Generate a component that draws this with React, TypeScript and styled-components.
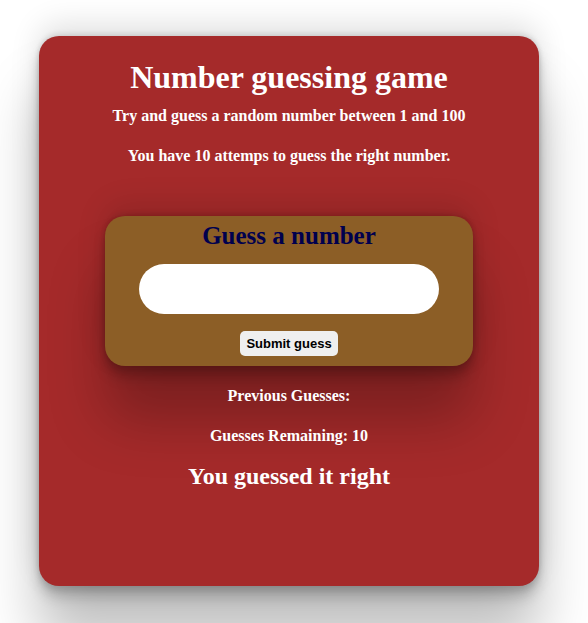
import React, { useState } from "react";
import styled, { createGlobalStyle } from "styled-components";

const GlobalStyle = createGlobalStyle`
  body {
    margin: 0;
    background: #fff;
    font-family: "Liberation Serif", "Times New Roman", serif;
  }
`;

const Page = styled.main`
  display: flex;
  justify-content: center;
  align-items: flex-start;
  min-height: 100vh;
  box-sizing: border-box;
  padding: 36px 49px 37px 39px;
  overflow: hidden;
`;

const Card = styled.section`
  box-sizing: border-box;
  width: 100%;
  max-width: 500px;
  padding: 22px 24px 90px;
  border-radius: 20px;
  background: brown;
  color: #fff;
  text-align: center;
  box-shadow: rgba(0, 0, 0, 0.25) 0 54px 55px,
    rgba(0, 0, 0, 0.12) 0 -12px 30px, rgba(0, 0, 0, 0.12) 0 4px 6px,
    rgba(0, 0, 0, 0.17) 0 12px 13px, rgba(0, 0, 0, 0.09) 0 -3px 5px;
`;

const Title = styled.h1`
  margin: 0;
  font-size: 32px;
  line-height: 38px;
`;

const Line = styled.p`
  margin: 0;
  font-size: 16px;
  font-weight: bold;
  line-height: 40px;
`;

const GuessForm = styled.form`
  display: flex;
  flex-direction: column;
  align-items: center;
  box-sizing: border-box;
  width: 100%;
  max-width: 368px;
  margin: 40px auto 10px;
  padding: 4px 0 10px;
  border-radius: 20px;
  background: #8c5e26;
  box-shadow: rgba(0, 0, 0, 0.25) 0 54px 55px,
    rgba(0, 0, 0, 0.12) 0 -12px 30px, rgba(0, 0, 0, 0.12) 0 4px 6px,
    rgba(0, 0, 0, 0.17) 0 12px 13px, rgba(0, 0, 0, 0.09) 0 -3px 5px;
`;

const FieldLabel = styled.label`
  color: #00004e;
  font-size: 25px;
  font-weight: bold;
  line-height: 32px;
`;

const GuessInput = styled.input`
  box-sizing: border-box;
  width: 300px;
  max-width: 90%;
  height: 50px;
  margin: 12px 0 17px;
  padding: 0 20px;
  border: 0;
  border-radius: 25px;
  background: #fff;
  font: bold 24px "Liberation Serif", serif;
  text-align: center;
`;

const SubmitButton = styled.button`
  height: 25px;
  padding: 0 6px;
  border: 0;
  border-radius: 5px;
  background: #efefef;
  color: #000;
  font: bold 13px "Liberation Sans", Arial, sans-serif;
`;

const Result = styled.h2`
  margin: 0;
  font-size: 24px;
  line-height: 40px;
`;

export default function App() {
  const [guess, setGuess] = useState("");

  return (
    <>
      <GlobalStyle />
      <Page>
        <Card>
          <Title>Number guessing game</Title>
          <Line>Try and guess a random number between 1 and 100</Line>
          <Line>You have 10 attemps to guess the right number.</Line>
          <GuessForm onSubmit={(event) => event.preventDefault()}>
            <FieldLabel htmlFor="guess">Guess a number</FieldLabel>
            <GuessInput
              id="guess"
              type="text"
              value={guess}
              onChange={(event) => setGuess(event.target.value)}
            />
            <SubmitButton type="submit">Submit guess</SubmitButton>
          </GuessForm>
          <Line>Previous Guesses:</Line>
          <Line>Guesses Remaining: 10</Line>
          <Result>You guessed it right</Result>
        </Card>
      </Page>
    </>
  );
}
